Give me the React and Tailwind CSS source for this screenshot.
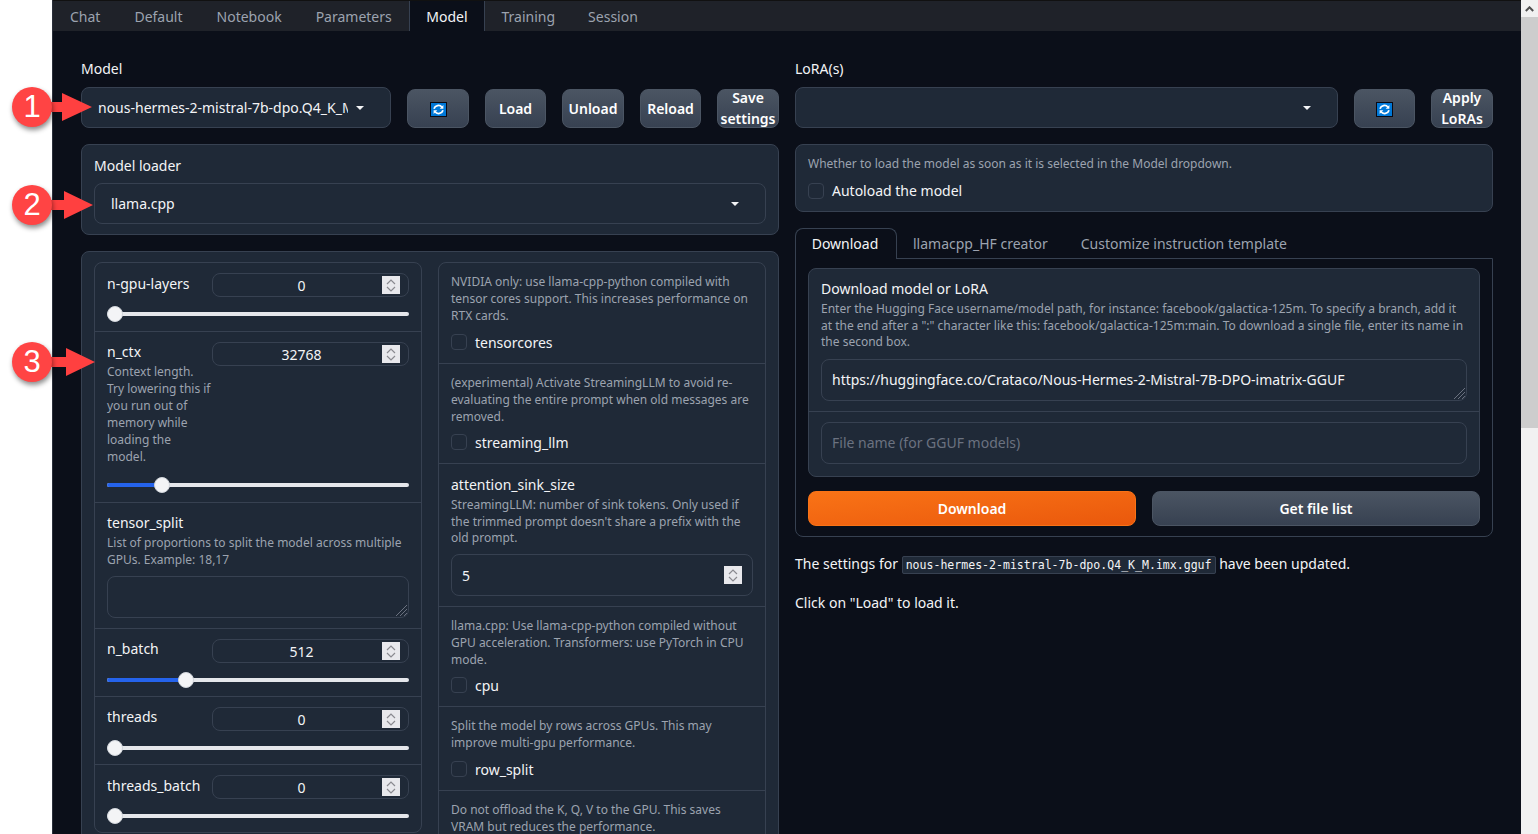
const tabs = [
    { name: 'Chat', pad: 'px-[17px]' },
    { name: 'Default', pad: 'px-[17px]' },
    { name: 'Notebook', pad: 'px-[17px]' },
    { name: 'Parameters', pad: 'px-[17px]' },
    { name: 'Model', pad: 'px-[16.5px]' },
    { name: 'Training', pad: 'px-[16.5px]' },
    { name: 'Session', pad: 'px-[16.5px]' },
];

const RefreshIcon = () => (
    <svg width="17" height="15" viewBox="0 0 17 15" className="block mt-[1px]">
        <rect x="0.5" y="0.5" width="16" height="14" fill="#0078d7" stroke="#0a0a14" />
        <path d="M4 6.8a4.6 4.6 0 0 1 8-1.6" fill="none" stroke="#fff" strokeWidth="1.8" />
        <path d="M13.4 3v3.7H9.7z" fill="#fff" />
        <path d="M13 8.2a4.6 4.6 0 0 1-8 1.6" fill="none" stroke="#fff" strokeWidth="1.8" />
        <path d="M3.6 12V8.3h3.7z" fill="#fff" />
    </svg>
);

const Caret = () => <span className="block w-0 h-0 border-x-[4px] border-x-transparent border-t-[4px] border-t-[#f3f4f6]" />;

const Btn = ({ children, w }) => (
    <button className={`${w} h-[39px] mt-[2px] shrink-0 rounded-[8px] border border-[#4b5563] bg-gradient-to-b from-[#4b5563] to-[#374151] text-white font-semibold text-[14px] leading-[21px] flex items-center justify-center`}>
        {children}
    </button>
);

const Stepper = () => (
    <span className="w-[18px] h-[18px] bg-[#e8e8ec] flex flex-col items-center justify-center gap-[1px] shrink-0">
        <svg width="10" height="6" viewBox="0 0 10 6"><path d="M1 5l4-4 4 4" fill="none" stroke="#8a8a90" strokeWidth="1.2" /></svg>
        <svg width="10" height="6" viewBox="0 0 10 6"><path d="M1 1l4 4 4-4" fill="none" stroke="#8a8a90" strokeWidth="1.2" /></svg>
    </span>
);

const Slider = ({ thumb }) => (
    <div className="relative h-[4px] w-[302px] rounded-full bg-[#e5e7eb]">
        {thumb > 8 && <div className="absolute left-0 top-0 h-[4px] rounded-l-full bg-[#2563eb]" style={{ width: thumb }} />}
        <div className="absolute top-[-6px] w-[16px] h-[16px] rounded-full bg-[#f3f4f6] border border-[#d1d5db]" style={{ left: thumb - 8 }} />
    </div>
);

const NumberRow = ({ label, value, thumb, height, info, labelPad = '', sliderTop = 'mt-[15px]', last }) => (
    <div className={`${height} px-[12px] pt-[10px] ${last ? '' : 'border-b border-[#374151]'}`}>
        <div className="flex items-start justify-between">
            <div className="w-[105px]">
                <div className={`text-[14px] leading-[21px] text-[#f3f4f6] ${labelPad}`}>{label}</div>
                {info && <div className="mt-[2px] text-[12px] leading-[16.9px] text-[#9ca3af] w-[106px]">{info}</div>}
            </div>
            <div className="w-[197px] h-[24px] rounded-[8px] border border-[#374151] flex items-center pr-[8px]">
                <span className="flex-1 text-center text-[14px] text-[#f3f4f6] pl-[8px]">{value}</span>
                <Stepper />
            </div>
        </div>
        <div className={sliderTop}>
            <Slider thumb={thumb} />
        </div>
    </div>
);

const CheckRow = ({ info, label, height, labelTop = 'mt-[7.2px]', last }) => (
    <div className={`${height} px-[12px] pt-[11px] ${last ? '' : 'border-b border-[#374151]'}`}>
        <p className="text-[12px] leading-[16.8px] text-[#9ca3af]">{info}</p>
        <label className={`${labelTop} flex items-center gap-[8px] text-[14px] leading-[21px] text-[#f3f4f6]`}>
            <span className="w-[16px] h-[16px] rounded-[4px] border border-[#374151] shrink-0" />
            {label}
        </label>
    </div>
);

const Badge = ({ n, top, head, tip }) => (
    <div className="absolute left-[12px] w-[84px] h-[40px]" style={{ top }}>
        <svg className="absolute left-[30px] top-[-2px]" width="66" height="44" viewBox="0 0 66 44">
            <path d={`M0 17H${head}V8L${tip} 22 ${head} 36V27H0z`} fill="#ff4040" />
        </svg>
        <div className="absolute left-0 top-0 w-[40px] h-[40px] rounded-full bg-[#ff4444] shadow-[1px_3px_5px_rgba(0,0,0,0.45)] flex items-center justify-center text-white text-[31px] font-['Liberation_Sans',sans-serif]">
            {n}
        </div>
    </div>
);

const App = () => {
    return (
        <div className="relative h-screen overflow-hidden bg-white flex font-['Noto_Sans',sans-serif]">
            <div className="w-[52px] shrink-0 bg-white" />
            <div className="flex-1 min-w-0 bg-[#0b0f19] border-l border-[#2b303b] overflow-hidden">
                <div className="h-[31px] bg-[#1f2229] border-t border-[#111] flex">
                    {tabs.map((t) => (
                        <div
                            key={t.name}
                            className={`${t.pad} text-[14px] leading-[32px] ${t.name === 'Model' ? 'bg-[#0b0f19] text-[#f3f4f6] border-x border-[#374151]' : 'text-[#9ca3af]'}`}
                        >
                            {t.name}
                        </div>
                    ))}
                </div>

                <div className="pl-[28px] pr-[28px] pt-[27px] flex gap-[16px]">
                    <div className="w-[698px] shrink-0">
                        <div className="text-[14px] leading-[21px] text-[#f3f4f6]">Model</div>
                        <div className="mt-[8px] flex gap-[16px]">
                            <div className="w-[310px] h-[41px] rounded-[8px] border border-[#374151] bg-[#1f2937] flex items-center pl-[16px] pr-[26px] gap-[8px]">
                                <span className="w-[251px] overflow-hidden whitespace-nowrap text-[14px] text-[#f3f4f6]">nous-hermes-2-mistral-7b-dpo.Q4_K_M.imx.gguf</span>
                                <Caret />
                            </div>
                            <Btn w="w-[62px]"><RefreshIcon /></Btn>
                            <Btn w="w-[61px]">Load</Btn>
                            <Btn w="w-[62px]">Unload</Btn>
                            <Btn w="w-[61px]">Reload</Btn>
                            <Btn w="w-[62px]"><span className="block pb-[2px]">Save settings</span></Btn>
                        </div>

                        <div className="mt-[16px] h-[91px] rounded-[8px] border border-[#374151] bg-[#1f2937] px-[12px] pt-[10px]">
                            <div className="text-[14px] leading-[21px] text-[#f3f4f6]">Model loader</div>
                            <div className="mt-[7px] h-[41px] rounded-[8px] border border-[#374151] flex items-center justify-between pl-[16px] pr-[26px] text-[14px] text-[#f3f4f6]">
                                llama.cpp
                                <Caret />
                            </div>
                        </div>

                        <div className="mt-[16px] h-[620px] rounded-[8px] border border-[#374151] bg-[#1f2937] px-[12px] pt-[10px] flex gap-[16px]">
                            <div className="w-[328px] h-[571px] rounded-[8px] border border-[#374151]">
                                <NumberRow label="n-gpu-layers" value="0" thumb={8} height="h-[69px]" />
                                <NumberRow
                                    label="n_ctx"
                                    value="32768"
                                    thumb={55}
                                    height="h-[171px]"
                                    labelPad="-mt-[1px]"
                                    sliderTop="mt-[17.4px]"
                                    info="Context length. Try lowering this if you run out of memory while loading the model."
                                />
                                <div className="h-[126px] px-[12px] pt-[9px] border-b border-[#374151]">
                                    <div className="text-[14px] leading-[21px] text-[#f3f4f6]">tensor_split</div>
                                    <p className="mt-[2px] text-[12px] leading-[16.8px] text-[#9ca3af]">List of proportions to split the model across multiple GPUs. Example: 18,17</p>
                                    <div className="relative mt-[7px] w-[302px] h-[42px] rounded-[8px] border border-[#374151] overflow-hidden">
                                        <svg className="absolute right-0 bottom-0" width="14" height="14" viewBox="0 0 14 14">
                                            <path d="M2 13L13 2M6 13l7-7M10 13l3-3" stroke="#6b7280" strokeWidth="1" />
                                        </svg>
                                    </div>
                                </div>
                                <NumberRow label="n_batch" value="512" thumb={79} height="h-[68px]" labelPad="-mt-[1px]" />
                                <NumberRow label="threads" value="0" thumb={8} height="h-[68px]" labelPad="-mt-[1px]" />
                                <NumberRow label="threads_batch" value="0" thumb={8} height="h-[66px]" last />
                            </div>

                            <div className="w-[328px] h-[600px] rounded-[8px] border border-[#374151]">
                                <CheckRow
                                    height="h-[101px]"
                                    label="tensorcores"
                                    info="NVIDIA only: use llama-cpp-python compiled with tensor cores support. This increases performance on RTX cards."
                                />
                                <CheckRow
                                    height="h-[100px]"
                                    label="streaming_llm"
                                    labelTop="mt-[6.6px]"
                                    info="(experimental) Activate StreamingLLM to avoid re-evaluating the entire prompt when old messages are removed."
                                />
                                <div className="h-[143px] px-[12px] pt-[10px] border-b border-[#374151]">
                                    <div className="text-[14px] leading-[21px] text-[#f3f4f6]">attention_sink_size</div>
                                    <p className="mt-[2px] text-[12px] leading-[16.6px] text-[#9ca3af]">StreamingLLM: number of sink tokens. Only used if the trimmed prompt doesn't share a prefix with the old prompt.</p>
                                    <div className="mt-[7.6px] w-[302px] h-[42px] rounded-[8px] border border-[#374151] flex items-center justify-between pl-[10px] pr-[10px] text-[14px] text-[#f3f4f6]">
                                        5
                                        <Stepper />
                                    </div>
                                </div>
                                <CheckRow
                                    height="h-[100px]"
                                    label="cpu"
                                    labelTop="mt-[6.6px]"
                                    info="llama.cpp: Use llama-cpp-python compiled without GPU acceleration. Transformers: use PyTorch in CPU mode."
                                />
                                <CheckRow
                                    height="h-[84px]"
                                    label="row_split"
                                    info="Split the model by rows across GPUs. This may improve multi-gpu performance."
                                />
                                <CheckRow
                                    height="h-[70px]"
                                    label="no_offload_kqv"
                                    info="Do not offload the K, Q, V to the GPU. This saves VRAM but reduces the performance."
                                    last
                                />
                            </div>
                        </div>
                    </div>

                    <div className="w-[698px] shrink-0">
                        <div className="text-[14px] leading-[21px] text-[#f3f4f6]">LoRA(s)</div>
                        <div className="mt-[8px] flex gap-[16px]">
                            <div className="w-[543px] h-[41px] rounded-[8px] border border-[#374151] bg-[#1f2937] flex items-center justify-end pr-[26px]">
                                <Caret />
                            </div>
                            <Btn w="w-[61px]"><RefreshIcon /></Btn>
                            <Btn w="w-[62px]"><span className="block pb-[2px]">Apply LoRAs</span></Btn>
                        </div>

                        <div className="mt-[16px] h-[68px] rounded-[8px] border border-[#374151] bg-[#1f2937] px-[12px] pt-[10px]">
                            <p className="text-[12px] leading-[17px] text-[#9ca3af]">Whether to load the model as soon as it is selected in the Model dropdown.</p>
                            <label className="mt-[8px] flex items-center gap-[8px] text-[14px] leading-[21px] text-[#f3f4f6]">
                                <span className="w-[16px] h-[16px] rounded-[4px] border border-[#374151]" />
                                Autoload the model
                            </label>
                        </div>

                        <div className="mt-[16px] h-[30px] flex text-[14px] leading-[32px]">
                            <div className="w-[102px] text-center pr-[2px] leading-[30px] rounded-t-[8px] border-x border-t border-[#374151] bg-[#0b0f19] text-[#f3f4f6] relative z-10 h-[31px]">Download</div>
                            <div className="ml-[16px] text-[#9ca3af]">llamacpp_HF creator</div>
                            <div className="ml-[33px] text-[#9ca3af]">Customize instruction template</div>
                        </div>
                        <div className="h-[279px] rounded-b-[8px] border border-[#374151] px-[12px] pt-[9px]">
                            <div className="h-[209px] rounded-[8px] border border-[#374151] bg-[#1f2937]">
                                <div className="h-[143px] px-[12px] pt-[9px] border-b border-[#374151]">
                                    <div className="text-[14px] leading-[21px] text-[#f3f4f6]">Download model or LoRA</div>
                                    <p className="mt-[2px] text-[12px] leading-[16.6px] text-[#9ca3af]">Enter the Hugging Face username/model path, for instance: facebook/galactica-125m. To specify a branch, add it at the end after a ":" character like this: facebook/galactica-125m:main. To download a single file, enter its name in the second box.</p>
                                    <div className="relative mt-[8px] h-[42px] rounded-[8px] border border-[#374151] pl-[10px] text-[14px] leading-[40px] text-[#f3f4f6] overflow-hidden">
                                        https://huggingface.co/Crataco/Nous-Hermes-2-Mistral-7B-DPO-imatrix-GGUF
                                        <svg className="absolute right-0 bottom-0" width="14" height="14" viewBox="0 0 14 14">
                                            <path d="M2 13L13 2M6 13l7-7M10 13l3-3" stroke="#6b7280" strokeWidth="1" />
                                        </svg>
                                    </div>
                                </div>
                                <div className="px-[12px] pt-[10px]">
                                    <div className="h-[42px] rounded-[8px] border border-[#374151] pl-[10px] text-[14px] leading-[40px] text-[#6b7280]">File name (for GGUF models)</div>
                                </div>
                            </div>
                            <div className="mt-[14px] flex gap-[16px]">
                                <button className="w-[328px] h-[35px] rounded-[8px] border border-[#f97316] bg-gradient-to-br from-[#f97316] to-[#ea580c] text-white font-semibold text-[14px]">Download</button>
                                <button className="w-[328px] h-[35px] rounded-[8px] border border-[#4b5563] bg-gradient-to-b from-[#4b5563] to-[#374151] text-white font-semibold text-[14px]">Get file list</button>
                            </div>
                        </div>

                        <p className="mt-[16px] text-[14px] leading-[21px] text-[#f3f4f6] whitespace-nowrap">
                            The settings for{' '}
                            <code className="px-[3px] py-[1px] rounded-[2px] border border-[#374151] bg-[#1f2937] text-[11.55px] font-['DejaVu_Sans_Mono',monospace]">nous-hermes-2-mistral-7b-dpo.Q4_K_M.imx.gguf</code>{' '}
                            have been updated.
                        </p>
                        <p className="mt-[16px] text-[14px] leading-[21px] text-[#f3f4f6]">Click on "Load" to load it.</p>
                    </div>
                </div>
            </div>

            <div className="w-[17px] shrink-0 bg-[#f1f1f1] flex flex-col">
                <div className="h-[17px] flex items-center justify-center">
                    <svg width="9" height="6" viewBox="0 0 9 6"><path d="M0.8 5L4.5 1.3 8.2 5" fill="none" stroke="#505050" strokeWidth="2" /></svg>
                </div>
                <div className="h-[411px] bg-[#cdcdcd]" />
            </div>

            <Badge n="1" top={87} head={20} tip={50} />
            <Badge n="2" top={185} head={22} tip={51} />
            <Badge n="3" top={342} head={24} tip={53} />
        </div>
    );
};

export default App;
